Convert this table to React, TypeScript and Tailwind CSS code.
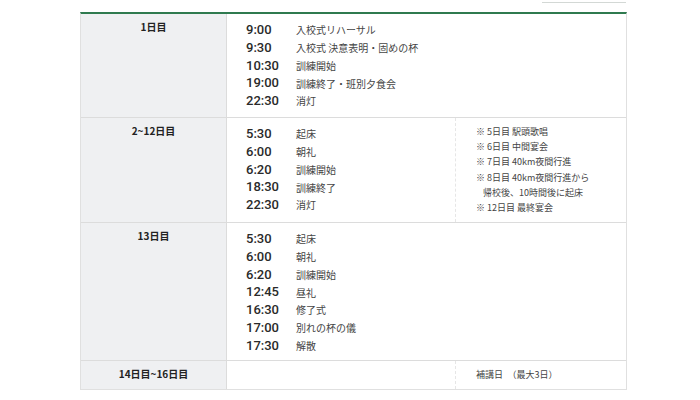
import React from "react";

const jp = { fontFamily: '"Noto Sans CJK JP", "Noto Sans", sans-serif' };
const num = { fontFamily: 'Roboto, "Liberation Sans", "Noto Sans CJK JP", sans-serif' };

type Item = [string, string];

function TimeList({ items }: { items: Item[] }) {
  return (
    <div className="pl-[19px] pt-[7px]">
      {items.map(([t, s]) => (
        <div key={t + s} className="flex items-center h-[17.75px]">
          <span className="w-[50px] text-[13px] font-medium text-[#2a2a2a]" style={num}>
            {t}
          </span>
          <span className="text-[10px] text-[#444]" style={jp}>
            {s}
          </span>
        </div>
      ))}
    </div>
  );
}

function Label({ children }: { children: React.ReactNode }) {
  return (
    <div
      className="w-[146px] shrink-0 bg-[#eff0f2] border-r border-[#dcdcdc] pt-[6px] text-center text-[10px] font-bold leading-[14px] text-[#222]"
      style={jp}
    >
      {children}
    </div>
  );
}

export default function App() {
  return (
    <div className="w-[700px] h-[400px] bg-white overflow-hidden">
      <div className="h-[12px] flex justify-end pr-[74px]">
        <div className="w-[84px] h-[3px] border-b border-[#d3d8d5]" />
      </div>
      <div className="ml-[80px] w-[547px] border-t-2 border-t-[#2f7a4f] border-x border-b border-x-[#e0e0e0] border-b-[#e0e0e0]">
        <div className="flex h-[104px] border-b border-[#dcdcdc]">
          <Label>1日目</Label>
          <div className="flex-1">
            <TimeList
              items={[
                ["9:00", "入校式リハーサル"],
                ["9:30", "入校式 決意表明・固めの杯"],
                ["10:30", "訓練開始"],
                ["19:00", "訓練終了・班別夕食会"],
                ["22:30", "消灯"],
              ]}
            />
          </div>
        </div>
        <div className="flex h-[105px] border-b border-[#dcdcdc]">
          <Label>2~12日目</Label>
          <div className="w-[228px] shrink-0 pt-[-1px]">
            <TimeList
              items={[
                ["5:30", "起床"],
                ["6:00", "朝礼"],
                ["6:20", "訓練開始"],
                ["18:30", "訓練終了"],
                ["22:30", "消灯"],
              ]}
            />
          </div>
          <div
            className="flex-1 border-l border-dashed border-[#e6e6e6] pl-[20px] pt-[6px] text-[9px] leading-[15.2px] text-[#444]"
            style={jp}
          >
            <div>※ 5日目 駅頭歌唱</div>
            <div>※ 6日目 中間宴会</div>
            <div>※ 7日目 40km夜間行進</div>
            <div>※ 8日目 40km夜間行進から</div>
            <div className="pl-[7px]">帰校後、10時間後に起床</div>
            <div>※ 12日目 最終宴会</div>
          </div>
        </div>
        <div className="flex h-[138px] border-b border-[#dcdcdc]">
          <Label>13日目</Label>
          <div className="flex-1">
            <TimeList
              items={[
                ["5:30", "起床"],
                ["6:00", "朝礼"],
                ["6:20", "訓練開始"],
                ["12:45", "昼礼"],
                ["16:30", "修了式"],
                ["17:00", "別れの杯の儀"],
                ["17:30", "解散"],
              ]}
            />
          </div>
        </div>
        <div className="flex h-[28px]">
          <Label>14日目~16日目</Label>
          <div className="w-[228px] shrink-0" />
          <div
            className="flex-1 border-l border-dashed border-[#e6e6e6] pl-[20px] pt-[7px] text-[9px] leading-[14px] text-[#444]"
            style={jp}
          >
            補講日　（最大3日）
          </div>
        </div>
      </div>
    </div>
  );
}
